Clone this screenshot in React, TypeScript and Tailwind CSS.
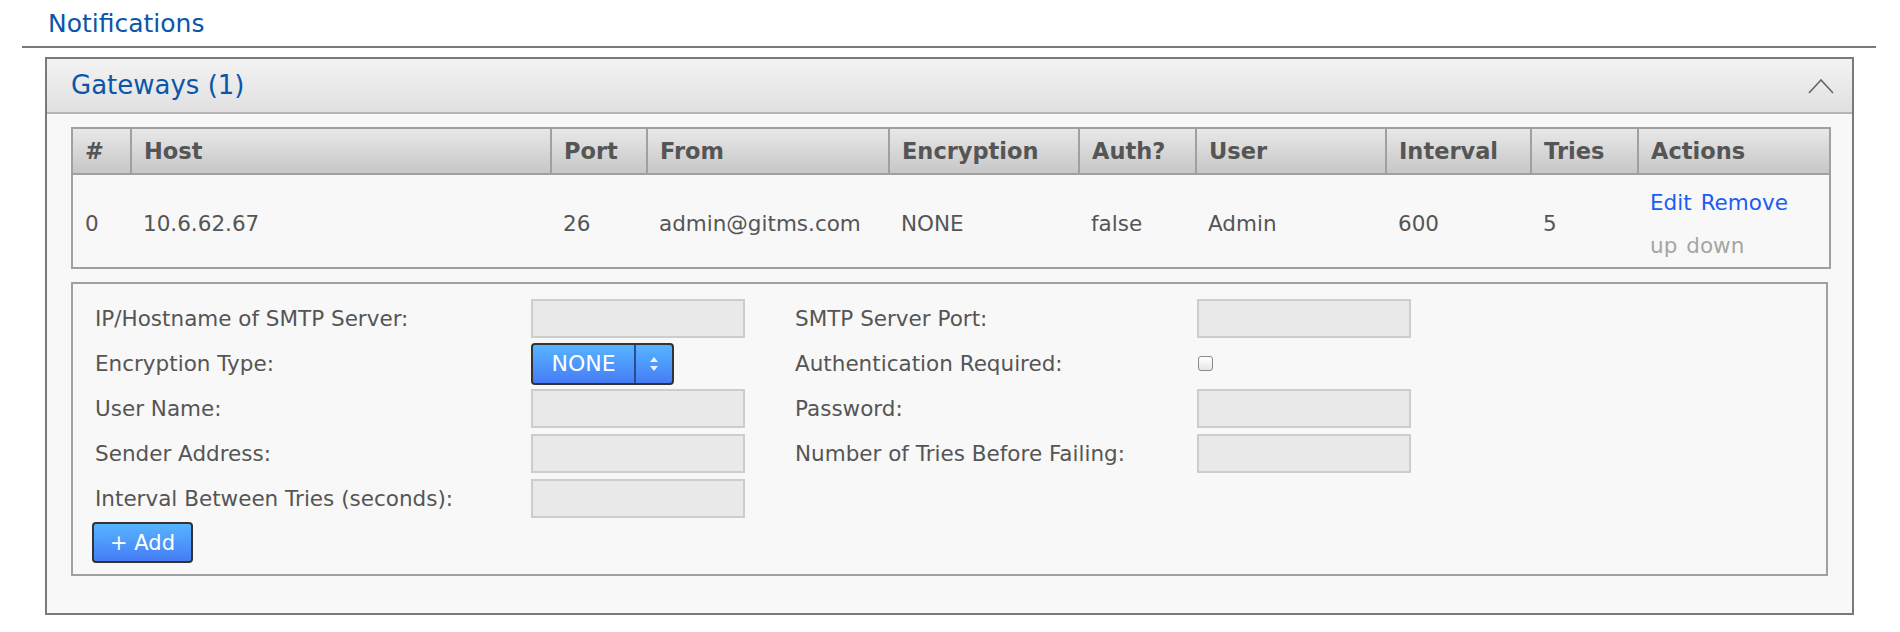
import React from "react";

const cols = [
  { label: "#", w: 59 },
  { label: "Host", w: 420 },
  { label: "Port", w: 96 },
  { label: "From", w: 242 },
  { label: "Encryption", w: 190 },
  { label: "Auth?", w: 117 },
  { label: "User", w: 190 },
  { label: "Interval", w: 145 },
  { label: "Tries", w: 107 },
  { label: "Actions", w: 192 },
];

const row = ["0", "10.6.62.67", "26", "admin@gitms.com", "NONE", "false", "Admin", "600", "5"];

function TextBox() {
  return <div className="w-[214px] h-[39px] bg-[#e9e9e9] border-2 border-[#cdcdcd]" />;
}

function FormRow({ label, w, children }: { label: string; w: string; children: React.ReactNode }) {
  return (
    <div className="flex items-center h-[45px]">
      <div className={w + " shrink-0 pt-[2px]"}>{label}</div>
      {children}
    </div>
  );
}

export default function App() {
  return (
    <div className="min-h-[632px] bg-white text-[#555] font-['DejaVu_Sans',_Verdana,_sans-serif] text-[21.5px]">
      <div className="pl-[48px] pt-[5px] h-[46px] text-[25px] text-[#0b56a8]">Notifications</div>
      <div className="ml-[22px] mr-[24px] h-[2px] bg-[#7a7a7a]" />
      <div className="ml-[45px] mr-[46px] mt-[9px] border-2 border-[#7a7a7a] bg-[#f8f8f8]">
        <div className="flex items-center justify-between h-[55px] pl-[24px] pr-[18px] bg-gradient-to-b from-[#f3f3f3] to-[#e0e0e0] border-b-2 border-[#b5b5b5]">
          <span className="text-[26px] text-[#0b56a8]">Gateways (1)</span>
          <svg width="26" height="16" viewBox="0 0 26 16" fill="none" stroke="#666" strokeWidth="1.6">
            <path d="M1 15 L13 2 L25 15" />
          </svg>
        </div>
        <div className="px-[24px] pt-[13px] pb-[37px]">
          <table className="border-collapse table-fixed w-[1758px] border-2 border-[#a0a0a0]">
            <thead>
              <tr className="h-[46px] bg-gradient-to-b from-[#e9e9e9] to-[#c6c6c6]">
                {cols.map((c) => (
                  <th
                    key={c.label}
                    style={{ width: c.w }}
                    className="text-left font-bold text-[22.5px] pl-[12px] pt-[2px] border-2 border-[#a0a0a0] text-[#555]"
                  >
                    {c.label}
                  </th>
                ))}
              </tr>
            </thead>
            <tbody>
              <tr className="h-[94px]">
                {row.map((v, i) => (
                  <td key={i} className="pl-[12px] pt-[7px]">
                    {v}
                  </td>
                ))}
                <td className="pl-[12px] pt-[6px]">
                  <div className="flex flex-col gap-[19px] leading-[24px]">
                    <div className="flex gap-[9px] text-[#1a5cf5]">
                      <span>Edit</span>
                      <span>Remove</span>
                    </div>
                    <div className="flex gap-[9px] text-[#a5a5a5]">
                      <span>up</span>
                      <span>down</span>
                    </div>
                  </div>
                </td>
              </tr>
            </tbody>
          </table>
          <div className="mt-[13px] border-2 border-[#a0a0a0] pl-[22px] pt-[12px] pb-[11px]">
            <div className="flex">
              <div className="w-[700px]">
                <FormRow w="w-[436px]" label="IP/Hostname of SMTP Server:">
                  <TextBox />
                </FormRow>
                <FormRow w="w-[436px]" label="Encryption Type:">
                  <div className="flex h-[42px] w-[143px] rounded-[4px] border-2 border-[#333] bg-gradient-to-b from-[#57b4ff] to-[#467cf6] text-white overflow-hidden">
                    <div className="w-[103px] flex items-center justify-center border-r-2 border-[#2a4c90] text-[22px]">NONE</div>
                    <div className="flex-1 flex items-center justify-center">
                      <svg width="10" height="16" viewBox="0 0 10 16" fill="#e8f0ff">
                        <path d="M5 1 L9 6 L1 6 Z" />
                        <path d="M5 15 L9 10 L1 10 Z" />
                      </svg>
                    </div>
                  </div>
                </FormRow>
                <FormRow w="w-[436px]" label="User Name:">
                  <TextBox />
                </FormRow>
                <FormRow w="w-[436px]" label="Sender Address:">
                  <TextBox />
                </FormRow>
                <FormRow w="w-[436px]" label="Interval Between Tries (seconds):">
                  <TextBox />
                </FormRow>
              </div>
              <div>
                <FormRow w="w-[402px]" label="SMTP Server Port:">
                  <TextBox />
                </FormRow>
                <FormRow w="w-[402px]" label="Authentication Required:">
                  <div className="w-[15px] h-[15px] ml-[1px] rounded-[3px] border border-[#8a8a8a] bg-gradient-to-b from-[#fff] to-[#e5e5e5]" />
                </FormRow>
                <FormRow w="w-[402px]" label="Password:">
                  <TextBox />
                </FormRow>
                <FormRow w="w-[402px]" label="Number of Tries Before Failing:">
                  <TextBox />
                </FormRow>
              </div>
            </div>
            <button className="mt-[1px] -ml-[3px] w-[101px] h-[41px] pt-[2px] rounded-[4px] border-2 border-[#333] bg-gradient-to-b from-[#57b4ff] to-[#467cf6] text-white text-[21px]">
              + Add
            </button>
          </div>
        </div>
      </div>
    </div>
  );
}
